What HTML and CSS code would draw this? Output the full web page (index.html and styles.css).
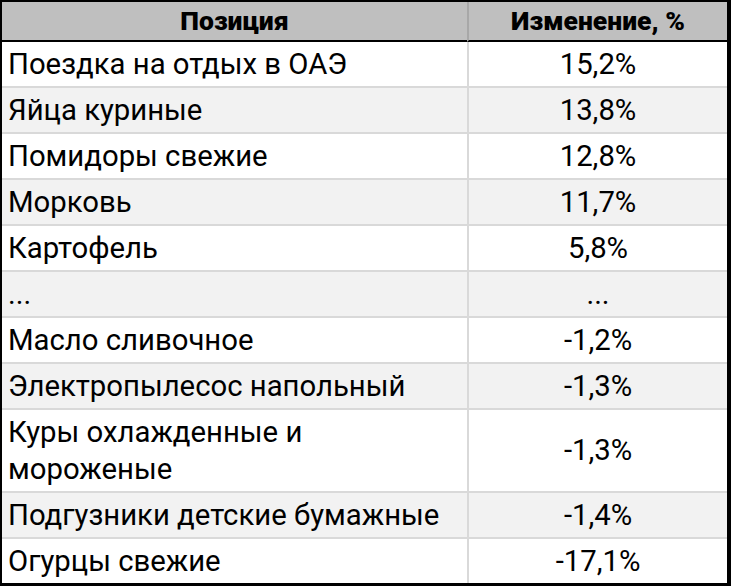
FILE: index.html
```html
<!DOCTYPE html>
<html lang="ru">
<head>
<meta charset="utf-8">
<title>Изменение цен</title>
<link rel="stylesheet" href="styles.css">
</head>
<body>
<table class="price-table">
  <thead>
    <tr>
      <th class="col-name">Позиция</th>
      <th class="col-change">Изменение, %</th>
    </tr>
  </thead>
  <tbody>
    <tr><td class="name">Поездка на отдых в ОАЭ</td><td class="change">15,2%</td></tr>
    <tr><td class="name">Яйца куриные</td><td class="change">13,8%</td></tr>
    <tr><td class="name">Помидоры свежие</td><td class="change">12,8%</td></tr>
    <tr><td class="name">Морковь</td><td class="change">11,7%</td></tr>
    <tr><td class="name">Картофель</td><td class="change">5,8%</td></tr>
    <tr><td class="name">...</td><td class="change">...</td></tr>
    <tr><td class="name">Масло сливочное</td><td class="change">-1,2%</td></tr>
    <tr><td class="name">Электропылесос напольный</td><td class="change">-1,3%</td></tr>
    <tr><td class="name">Куры охлажденные и<br>мороженые</td><td class="change">-1,3%</td></tr>
    <tr><td class="name">Подгузники детские бумажные</td><td class="change">-1,4%</td></tr>
    <tr><td class="name">Огурцы свежие</td><td class="change">-17,1%</td></tr>
  </tbody>
</table>
</body>
</html>
```

FILE: styles.css
```css
html, body {
  margin: 0;
  padding: 0;
  background: #ffffff;
}

.price-table {
  width: 731px;
  border-collapse: separate;
  border-spacing: 0;
  border-top: 2px solid #000;
  border-left: 2px solid #000;
  border-right: 4px solid #000;
  border-bottom: 3px solid #000;
  font-family: Roboto, "Liberation Sans", sans-serif;
  font-size: 29.3px;
  color: #000;
  table-layout: fixed;
}

.price-table th {
  background: #bfbfbf;
  font-weight: 900;
  font-size: 26.5px;
  height: 40px;
  padding: 0 6px;
  line-height: 36px;
  text-align: center;
  border-bottom: 2px solid #000;
  box-sizing: border-box;
}

.price-table .col-name {
  width: 465px;
}

.price-table .col-change {
  border-left: 2px solid #a8a8a8;
}

.price-table td {
  padding: 3.5px 6px 3.5px 6px;
  line-height: 37px;
  border-bottom: 2px solid #d9d9d9;
  vertical-align: middle;
}

.price-table tbody tr:last-child td {
  border-bottom: none;
}

.price-table tbody tr:nth-child(even) td {
  background: #f2f2f2;
}

.price-table td.name {
  text-align: left;
}

.price-table td.change {
  text-align: center;
  border-left: 2px solid #d9d9d9;
}
```
